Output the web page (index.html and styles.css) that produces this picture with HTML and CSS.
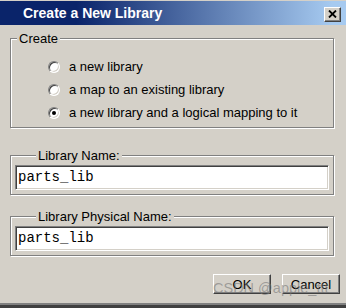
FILE: index.html
```html
<!DOCTYPE html>
<html>
<head>
<meta charset="utf-8">
<link rel="stylesheet" href="styles.css">
</head>
<body>
<div class="window">
  <div class="titlebar">
    <span class="title">Create a New Library</span>
    <span class="close"><svg width="9" height="8" viewBox="0 0 9 8"><path d="M1 0.5 L8 7.5 M8 0.5 L1 7.5" stroke="#000" stroke-width="1.8" fill="none"/></svg></span>
  </div>
  <div class="content">
    <fieldset class="group create">
      <legend>Create</legend>
      <div class="options">
        <div class="option"><span class="radio"></span><span>a new library</span></div>
        <div class="option"><span class="radio"></span><span>a map to an existing library</span></div>
        <div class="option"><span class="radio checked"></span><span>a new library and a logical mapping to it</span></div>
      </div>
    </fieldset>
    <fieldset class="group field first">
      <legend>Library Name:</legend>
      <div class="input">parts_lib</div>
    </fieldset>
    <fieldset class="group field second">
      <legend>Library Physical Name:</legend>
      <div class="input">parts_lib</div>
    </fieldset>
    <div class="buttons">
      <span class="btn">OK</span>
      <span class="btn">Cancel</span>
    </div>
  </div>
  <div class="footer"></div>
  <div class="watermark">CSDN @apple_ttt</div>
</div>
</body>
</html>
```
FILE: styles.css
```css
* { box-sizing: border-box; }
html, body { margin: 0; padding: 0; }
body { width: 346px; height: 308px; overflow: hidden; background: #d4d0c8; }
.window {
  position: relative;
  width: 346px;
  height: 308px;
  background: #d4d0c8;
  display: flex;
  flex-direction: column;
  font-family: "Liberation Sans", Arial, sans-serif;
  font-size: 13px;
  color: #000;
}
.titlebar {
  margin-top: 1px;
  height: 24px;
  display: flex;
  align-items: flex-start;
  justify-content: space-between;
  background: linear-gradient(to right, #0a246a 0%, #0a246a 22%, #a6caf0 96%);
  padding-left: 23px;
  padding-right: 5px;
}
.title {
  color: #fff;
  font-weight: bold;
  font-size: 14px;
  line-height: 24px;
}
.close {
  margin-top: 6px;
  width: 17px;
  height: 15px;
  background: #d4d0c8;
  border-top: 1px solid #fff;
  border-left: 1px solid #fff;
  border-right: 1px solid #404040;
  border-bottom: 1px solid #404040;
  box-shadow: inset -1px -1px 0 #808080;
  display: flex;
  align-items: center;
  justify-content: center;
}
.close svg { display: block; margin-top: -1px; }
.content {
  padding: 0 12px 0 10px;
  display: flex;
  flex-direction: column;
}
.group {
  margin: 0;
  border: 1px solid #808080;
  box-shadow: inset 1px 1px 0 #fff, 1px 1px 0 #fff;
  min-width: 0;
}
.group legend {
  font-size: 13px;
  line-height: 13px;
  padding: 0 2px;
  background: #d4d0c8;
}
.create {
  margin-top: 7px;
  padding: 10px 6px 3px 6px;
}
.options {
  margin-left: 31px;
  display: flex;
  flex-direction: column;
}
.option {
  height: 23px;
  display: flex;
  align-items: center;
  gap: 9px;
}
.radio {
  width: 12px;
  height: 12px;
  border-radius: 50%;
  background: #fff;
  border: 1px solid;
  border-color: #808080 #fff #fff #808080;
  box-shadow: inset 1px 1px 0 #404040, inset -1px -1px 0 #d4d0c8;
  position: relative;
  flex: none;
}
.radio.checked::after {
  content: "";
  position: absolute;
  left: 3px;
  top: 3px;
  width: 4px;
  height: 4px;
  border-radius: 50%;
  background: #000;
}
.field {
  padding: 3px 4px 4px 4px;
}
.field legend { margin-left: 21px; }
.field.first { margin-top: 21px; }
.field.second { margin-top: 15px; }
.input {
  height: 25px;
  background: #fff;
  border-top: 1px solid #808080;
  border-left: 1px solid #808080;
  border-right: 1px solid #fff;
  border-bottom: 1px solid #fff;
  box-shadow: inset 1px 1px 0 #404040, inset -1px -1px 0 #d4d0c8;
  font-family: "Liberation Mono", "Courier New", monospace;
  font-size: 14px;
  line-height: 23px;
  padding-left: 2px;
}
.buttons {
  margin-top: 18px;
  margin-right: -6px;
  display: flex;
  justify-content: flex-end;
  gap: 11px;
}
.btn {
  width: 58px;
  height: 20px;
  background: #d4d0c8;
  border-top: 1px solid #fff;
  border-left: 1px solid #fff;
  border-right: 1px solid #404040;
  border-bottom: 1px solid #404040;
  box-shadow: inset -1px -1px 0 #808080;
  display: flex;
  align-items: center;
  justify-content: center;
  font-size: 13px;
}
.footer {
  margin-top: auto;
  height: 5px;
  border-top: 2px solid #808080;
  background: #404040;
}
.watermark {
  position: absolute;
  left: 213px;
  top: 280px;
  font-size: 14.5px;
  color: rgba(120, 120, 120, 0.6);
  white-space: nowrap;
}
```
